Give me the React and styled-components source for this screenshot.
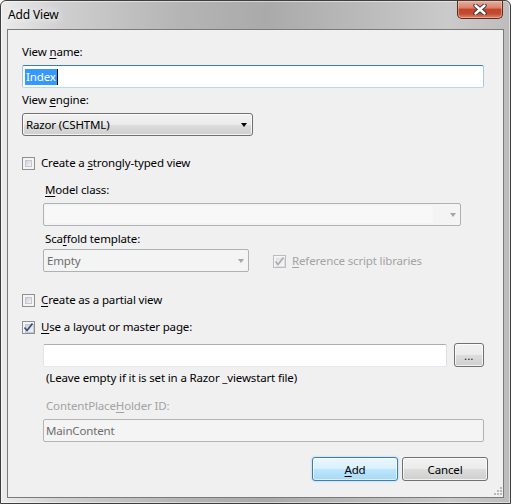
import React from "react";
import styled, { createGlobalStyle } from "styled-components";

const GlobalStyle = createGlobalStyle`
  html, body {
    margin: 0;
    padding: 0;
    background: #ffffff;
  }
  body {
    font-family: "Segoe UI", "Noto Sans", "Open Sans", sans-serif;
    font-size: 11.5px;
    letter-spacing: -0.15px;
    color: #000;
  }
  * {
    box-sizing: border-box;
  }
`;

const Window = styled.div`
  width: 511px;
  height: 504px;
  display: flex;
  flex-direction: column;
  border: 1px solid #3e3e3e;
  border-radius: 6px 6px 0 0;
  padding: 0 6px 5px;
  background: linear-gradient(
      to right,
      rgba(238, 238, 238, 0.95) 0%,
      rgba(214, 214, 214, 0.65) 12%,
      rgba(170, 170, 170, 0.55) 35%,
      rgba(150, 150, 150, 0.55) 52%,
      rgba(180, 180, 180, 0.5) 72%,
      rgba(208, 208, 208, 0.6) 88%,
      rgba(186, 186, 186, 0.6) 100%
    ),
    #c2c2c2;
  box-shadow: inset 0 0 0 1px rgba(255, 255, 255, 0.5);
  overflow: hidden;
`;

const TitleBar = styled.div`
  height: 28px;
  display: flex;
  justify-content: space-between;
  align-items: flex-start;
`;

const Title = styled.span`
  margin: 6px 0 0 1px;
  font-size: 12px;
  line-height: 16px;
  color: #000;
  text-shadow: 0 0 6px rgba(255, 255, 255, 0.9), 0 0 12px rgba(255, 255, 255, 0.8);
`;

const CloseButton = styled.div`
  width: 46px;
  height: 18px;
  margin-right: 1px;
  display: flex;
  align-items: center;
  justify-content: center;
  border: 1px solid #5b2a20;
  border-top: none;
  border-radius: 0 0 5px 5px;
  background: linear-gradient(
    to bottom,
    #e9ae9c 0%,
    #d8826b 40%,
    #c2452a 50%,
    #c44a2f 75%,
    #e0866b 100%
  );
  box-shadow: inset 0 0 0 1px rgba(255, 210, 200, 0.45);
`;

const Client = styled.div`
  flex: 1;
  display: flex;
  flex-direction: column;
  border: 1px solid #7a7a7a;
  background: #f0f0f0;
  padding: 14px 19px 0 14px;
`;

const Label = styled.div`
  line-height: 15px;
  height: 15px;
  white-space: nowrap;
  color: ${(p) => (p.$disabled ? "#a3a3a3" : "#000")};
  margin-top: ${(p) => p.$top || 0}px;
  margin-left: ${(p) => p.$left || 0}px;
`;

const Key = styled.span`
  text-decoration: underline;
  text-underline-offset: 2px;
`;

const TextBox = styled.div`
  height: 23px;
  margin-top: ${(p) => p.$top || 0}px;
  display: flex;
  align-items: center;
  padding-left: 2px;
  border: 1px solid;
  border-color: ${(p) =>
    p.$focused
      ? "#3d7bad #a4c9e3 #b7d9ed #a4c9e3"
      : p.$disabled
      ? "#b4b4b4"
      : "#abadb3 #dbdfe6 #e3e9ef #e2e3ea"};
  border-radius: 2px;
  background: ${(p) => (p.$disabled ? "#f4f4f4" : "#ffffff")};
  color: ${(p) => (p.$disabled ? "#6d6d6d" : "#000")};
  line-height: 15px;
  flex: ${(p) => (p.$grow ? 1 : "none")};
`;

const Selection = styled.span`
  background: #3399ff;
  color: #ffffff;
  padding: 0 1px;
  line-height: 16px;
`;

const Caret = styled.span`
  width: 1px;
  height: 16px;
  background: #000;
`;

const ComboButton = styled.div`
  height: 23px;
  width: ${(p) => p.$width}px;
  margin-top: ${(p) => p.$top || 0}px;
  display: flex;
  align-items: center;
  justify-content: space-between;
  padding: 0 5px 0 3px;
  border: 1px solid #707070;
  border-radius: 3px;
  background: linear-gradient(
    to bottom,
    #f2f2f2 0%,
    #ebebeb 50%,
    #dddddd 50%,
    #cfcfcf 100%
  );
  box-shadow: inset 0 0 0 1px rgba(255, 255, 255, 0.75);
  line-height: 15px;
`;

const DisabledCombo = styled.div`
  height: 23px;
  width: ${(p) => p.$width}px;
  margin-top: ${(p) => p.$top || 0}px;
  display: flex;
  align-items: center;
  justify-content: space-between;
  padding: 0 4px 0 3px;
  border: 1px solid #adb2b5;
  border-radius: 2px;
  background: #f4f4f4;
  color: #6d6d6d;
  line-height: 15px;
`;

const ComboField = styled.div`
  flex: 1;
  align-self: stretch;
  margin: 2px 17px 2px -2px;
  background: #f8f8f8;
`;

const Arrow = styled.span`
  width: 0;
  height: 0;
  border-left: 3.5px solid transparent;
  border-right: 3.5px solid transparent;
  border-top: 4px solid ${(p) => (p.$disabled ? "#a6a6a6" : "#000")};
  margin-top: 1px;
`;

const Indent = styled.div`
  display: flex;
  flex-direction: column;
  margin-left: 21px;
`;

const Row = styled.div`
  display: flex;
  align-items: center;
  gap: ${(p) => p.$gap || 0}px;
  margin-top: ${(p) => p.$top || 0}px;
`;

const CheckRow = styled.label`
  display: flex;
  align-items: center;
  gap: 6px;
  height: 15px;
  margin-top: ${(p) => p.$top || 0}px;
  margin-left: ${(p) => p.$left || 0}px;
  line-height: 15px;
  color: ${(p) => (p.$disabled ? "#a3a3a3" : "#000")};
  white-space: nowrap;
`;

const CheckBox = styled.span`
  width: 13px;
  height: 13px;
  display: grid;
  padding: 2px;
  margin-top: 1px;
  border: 1px solid ${(p) => (p.$disabled ? "#bcbcbc" : "#8e8f8f")};
  background: #f4f4f4;
  flex: none;
`;

const CheckFill = styled.span`
  grid-area: 1 / 1;
  border: 1px solid ${(p) => (p.$disabled ? "#dedede" : "#c4c8cc")};
  background: ${(p) =>
    p.$disabled
      ? "linear-gradient(135deg, #e6e6e6, #f7f7f7)"
      : "linear-gradient(135deg, #cdd1d6 0%, #e6e7e9 60%, #f6f6f6 100%)"};
`;

const CheckMark = styled.svg`
  grid-area: 1 / 1;
  width: 11px;
  height: 11px;
  margin: -2px 0 0 -2px;
  overflow: visible;
`;

const Hint = styled.div`
  line-height: 15px;
  height: 15px;
  margin: 3px 0 0 3px;
  white-space: nowrap;
`;

const BrowseButton = styled.div`
  width: 30px;
  height: 24px;
  margin-top: -1px;
  display: flex;
  align-items: center;
  justify-content: center;
  padding-top: 2px;
  border: 1px solid #707070;
  border-radius: 3px;
  background: linear-gradient(
    to bottom,
    #f2f2f2 0%,
    #ebebeb 50%,
    #dddddd 50%,
    #cfcfcf 100%
  );
  box-shadow: inset 0 0 0 1px rgba(255, 255, 255, 0.75);
  font-size: 10px;
  letter-spacing: 0.5px;
`;

const ButtonBar = styled.div`
  display: flex;
  justify-content: flex-end;
  gap: 4px;
  margin: 15px -4px 0 0;
`;

const Button = styled.div`
  width: 86px;
  height: 24px;
  display: flex;
  align-items: center;
  justify-content: center;
  border: 1px solid ${(p) => (p.$primary ? "#3c7fb1" : "#707070")};
  border-radius: 3px;
  background: ${(p) =>
    p.$primary
      ? "linear-gradient(to bottom, #eaf6fd 0%, #d9f0fc 50%, #bee6fd 50%, #a7d9f5 100%)"
      : "linear-gradient(to bottom, #f2f2f2 0%, #ebebeb 50%, #dddddd 50%, #cfcfcf 100%)"};
  box-shadow: ${(p) =>
    p.$primary
      ? "inset 0 0 0 1px rgba(255,255,255,0.6), 0 0 2px rgba(80,170,230,0.6)"
      : "inset 0 0 0 1px rgba(255,255,255,0.75)"};
  line-height: 15px;
`;

const Grip = styled.svg`
  align-self: flex-end;
  margin: auto -18px 2px 0;
  width: 9px;
  height: 9px;
`;

function Check({ disabled }) {
  return (
    <CheckBox $disabled={disabled}>
      <CheckFill $disabled={disabled} />
      <CheckMark viewBox="0 0 11 11">
        <path
          d="M1.5 5.5 L4 8.5 L9.5 1.5"
          fill="none"
          stroke={disabled ? "#a8aeb6" : "#3a4d86"}
          strokeWidth="1.7"
          strokeLinejoin="round"
        />
      </CheckMark>
    </CheckBox>
  );
}

function EmptyCheck() {
  return (
    <CheckBox>
      <CheckFill />
    </CheckBox>
  );
}

export default function App() {
  return (
    <>
      <GlobalStyle />
      <Window>
        <TitleBar>
          <Title>Add View</Title>
          <CloseButton>
            <svg width="14" height="11" viewBox="0 0 14 11">
              <path
                d="M2.5 1.5 L11.5 9.5 M11.5 1.5 L2.5 9.5"
                stroke="#3b3b3b"
                strokeWidth="4.4"
                strokeLinecap="round"
              />
              <path
                d="M2.5 1.5 L11.5 9.5 M11.5 1.5 L2.5 9.5"
                stroke="#ffffff"
                strokeWidth="2.4"
                strokeLinecap="round"
              />
            </svg>
          </CloseButton>
        </TitleBar>
        <Client>
          <Label>
            View <Key>n</Key>ame:
          </Label>
          <TextBox $top={6} $focused>
            <Selection>Index</Selection>
            <Caret />
          </TextBox>

          <Label $top={4}>
            View <Key>e</Key>ngine:
          </Label>
          <ComboButton $top={6} $width={231}>
            <span>Razor (CSHTML)</span>
            <Arrow />
          </ComboButton>

          <CheckRow $top={19}>
            <EmptyCheck />
            <span>
              Create a <Key>s</Key>trongly-typed view
            </span>
          </CheckRow>

          <Indent>
            <Label $top={12} $left={2}>
              <Key>M</Key>odel class:
            </Label>
            <DisabledCombo $top={6} $width={418}>
              <ComboField />
              <Arrow $disabled />
            </DisabledCombo>

            <Label $top={5} $left={2}>
              Sca<Key>f</Key>fold template:
            </Label>
            <Row $top={3}>
              <DisabledCombo $width={206}>
                <span>Empty</span>
                <Arrow $disabled />
              </DisabledCombo>
              <CheckRow $left={24} $disabled>
                <Check disabled />
                <span>
                  <Key>R</Key>eference script libraries
                </span>
              </CheckRow>
            </Row>
          </Indent>

          <CheckRow $top={20}>
            <EmptyCheck />
            <span>
              <Key>C</Key>reate as a partial view
            </span>
          </CheckRow>

          <CheckRow $top={12}>
            <Check />
            <span>
              <Key>U</Key>se a layout or master page:
            </span>
          </CheckRow>

          <Indent>
            <Row $top={10} $gap={7}>
              <TextBox $grow />
              <BrowseButton>...</BrowseButton>
            </Row>
            <Hint>(Leave empty if it is set in a Razor _viewstart file)</Hint>

            <Label $top={13} $left={3} $disabled>
              ContentPlace<Key>H</Key>older ID:
            </Label>
            <TextBox $top={6} $disabled>
              MainContent
            </TextBox>
          </Indent>

          <ButtonBar>
            <Button $primary>
              <Key>A</Key>dd
            </Button>
            <Button>Cancel</Button>
          </ButtonBar>

          <Grip viewBox="0 0 9 9">
            <g fill="#b8b8b8">
              <rect x="7" y="1" width="2" height="2" />
              <rect x="4" y="4" width="2" height="2" />
              <rect x="7" y="4" width="2" height="2" />
              <rect x="1" y="7" width="2" height="2" />
              <rect x="4" y="7" width="2" height="2" />
              <rect x="7" y="7" width="2" height="2" />
            </g>
          </Grip>
        </Client>
      </Window>
    </>
  );
}
